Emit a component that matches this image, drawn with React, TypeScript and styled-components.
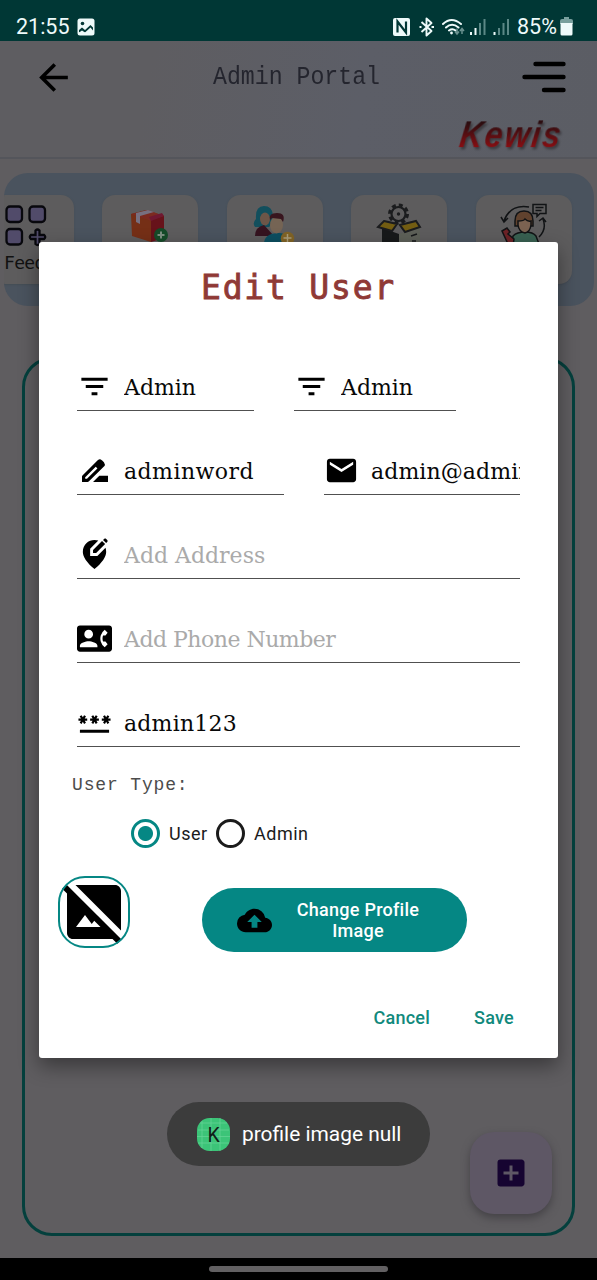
import React from "react";
import styled, { createGlobalStyle } from "styled-components";
import {
  MdAddBox, MdArrowBack, MdCloudUpload, MdContactPhone,
  MdEditLocationAlt, MdEmail, MdFilterList, MdHideImage, MdPassword,
} from "react-icons/md";

const teal = "#058784";

const GlobalStyle = createGlobalStyle`
  * { box-sizing: border-box; }
  body { margin: 0; background: #000; font-family: Roboto, sans-serif; }
  svg { display: block; flex: none; }
`;

const Screen = styled.div`
  position: relative;
  width: 597px;
  height: 1280px;
  overflow: hidden;
  display: flex;
  flex-direction: column;
  background: #5f5d60;
`;
const StatusBar = styled.div`
  height: 41px;
  flex: none;
  padding: 12px 24px 0 16px;
  display: flex;
  align-items: center;
  color: #eefafa;
  background: #003735;
`;
const StatusText = styled.span<{ $width: number }>`
  width: ${(p) => p.$width}px;
  font-size: 21.5px;
  line-height: 29px;
  white-space: nowrap;
`;
const StatusIcons = styled.div`
  margin-left: auto;
  display: flex;
  align-items: center;
`;
const Header = styled.header`
  height: 118px;
  flex: none;
  display: flex;
  flex-direction: column;
  border-bottom: 2px solid #54555b;
  background: linear-gradient(100deg, #5e5d61 25%, #5c5e67 60%, #5b5d64);
`;
const HeaderRow = styled.div`
  height: 72px;
  padding: 0 31px 0 32px;
  display: flex;
  align-items: center;
`;
const PortalTitle = styled.h1`
  flex: 1;
  margin: 0 0 1px 138px;
  font: 400 23.2px/30px "Liberation Mono", monospace;
  color: #24252e;
  transform: scaleY(1.1);
`;
const Logo = styled.div`
  align-self: flex-end;
  margin: 1px 30px 0 0;
  width: 110px;
  padding-left: 3px;
  font: italic 700 32px/42px "Liberation Sans", sans-serif;
  letter-spacing: 2px;
  white-space: nowrap;
  color: transparent;
  background: linear-gradient(#2c0d10 25%, #850e12 75%);
  background-clip: text;
  filter: drop-shadow(2px 2px 1px #3b3b40);
  transform: skewX(-8deg) scaleY(1.12);
`;
const Carousel = styled.div`
  margin: 14px 3px 0 4px;
  height: 133px;
  flex: none;
  padding-top: 22px;
  display: flex;
  gap: 28.4px;
  overflow: hidden;
  border-radius: 24px;
  background: #4a535e;
`;
const Tile = styled.div`
  flex: none;
  width: 96px;
  height: 89px;
  display: flex;
  flex-direction: column;
  border-radius: 13px;
  background: #5d5c5d;
  box-shadow: 0 1px 2px #454c55;
  &:first-child { margin-left: -26px; }
`;
const TileLabel = styled.span`
  padding-left: 26px;
  font: 18px/26px "DejaVu Sans Mono", monospace;
  letter-spacing: -0.7px;
  color: #111;
`;
const Frame = styled.main`
  margin: 51px 22px 22px;
  flex: 1;
  border: 3px solid #04403d;
  border-radius: 30px;
`;
const NavBar = styled.div`
  height: 22px;
  flex: none;
  display: flex;
  justify-content: center;
  padding-top: 8px;
  background: #000;
`;
const NavPill = styled.div`
  width: 179px;
  height: 6px;
  border-radius: 3px;
  background: #626062;
`;
const Fab = styled.button`
  position: absolute;
  left: 470px;
  top: 1132px;
  width: 82px;
  height: 82px;
  padding: 0;
  border: 0;
  border-radius: 24px;
  display: grid;
  place-items: center;
  color: #160431;
  background: #5e5765;
  box-shadow: 0 4px 9px #444246;
`;
const Toast = styled.div`
  position: absolute;
  left: 167px;
  top: 1102px;
  width: 263px;
  height: 64px;
  padding-left: 30px;
  display: flex;
  align-items: center;
  gap: 12px;
  border-radius: 32px;
  font-size: 20.9px;
  white-space: nowrap;
  color: #fff;
  background: #3c3c3c;
`;
const Dialog = styled.section`
  position: absolute;
  left: 39px;
  top: 242px;
  width: 519px;
  height: 816px;
  padding: 25px 38px 0;
  display: flex;
  flex-direction: column;
  border-radius: 3px;
  background: #fff;
  box-shadow: 0 8px 20px rgba(0, 0, 0, 0.4);
`;
const DialogTitle = styled.h2`
  margin: 0 0 18px;
  text-align: center;
  font: 400 33px/42px "DejaVu Sans Mono", monospace;
  letter-spacing: 1.8px;
  color: #8f3936;
  -webkit-text-stroke: 0.9px #8f3936;
`;
const FieldRow = styled.div`
  height: 84px;
  display: flex;
  align-items: flex-end;
  gap: 40px;
`;
const Field = styled.div<{ $width: number; $hint?: boolean; $tracking: number }>`
  width: ${(p) => p.$width}px;
  height: 48px;
  display: flex;
  align-items: center;
  gap: 12px;
  border-bottom: 1.5px solid #505050;
  color: #000;
  span {
    flex: 1;
    min-width: 0;
    padding-top: 2px;
    overflow: hidden;
    white-space: nowrap;
    font: 22px/30px "DejaVu Serif", serif;
    letter-spacing: ${(p) => p.$tracking}px;
    color: ${(p) => (p.$hint ? "#aaa" : "#080808")};
  }
`;
const TypeLabel = styled.div`
  margin: 26px 0 0 -5px;
  font: 18px/24px "Liberation Mono", monospace;
  letter-spacing: 0.85px;
  color: #4c4c4c;
`;
const RadioRow = styled.div`
  margin: 22px 0 0 55px;
  display: flex;
  align-items: center;
`;
const Radio = styled.label<{ $width: number }>`
  width: ${(p) => p.$width}px;
  display: flex;
  align-items: center;
  gap: 9px;
  font-size: 18px;
  line-height: 22px;
  letter-spacing: 0.5px;
  white-space: nowrap;
  color: #1b1b1b;
`;
const RadioDot = styled.span<{ $on?: boolean }>`
  width: 29px;
  height: 29px;
  margin: 0 0 0 -1px;
  flex: none;
  border-radius: 50%;
  border: 3px solid ${(p) => (p.$on ? teal : "#1b1b1b")};
  background: ${(p) => (p.$on ? `radial-gradient(circle, ${teal} 7px, #fff 8px)` : "#fff")};
`;
const ImageRow = styled.div`
  margin: 24px 0 0 -19px;
  display: flex;
  align-items: center;
  gap: 72px;
`;
const Avatar = styled.div`
  position: relative;
  width: 72px;
  height: 72px;
  border-radius: 27px;
  color: #000;
  &::after {
    content: "";
    position: absolute;
    inset: 0;
    border: 2.5px solid ${teal};
    border-radius: 27px;
  }
`;
const UploadButton = styled.button`
  width: 265px;
  height: 64px;
  margin-top: 16px;
  padding: 0 35px;
  border: 0;
  border-radius: 32px;
  display: flex;
  align-items: center;
  color: #000;
  background: ${teal};
  span {
    flex: 1;
    padding-left: 12px;
    white-space: pre-line;
    text-align: center;
    font: 500 18px/21.5px Roboto, sans-serif;
    letter-spacing: 0.25px;
    color: #fff;
  }
`;
const Actions = styled.div`
  margin: 45px 6px 0 0;
  display: flex;
  justify-content: flex-end;
  gap: 44px;
`;
const TextButton = styled.button`
  padding: 0;
  border: 0;
  background: none;
  font: 500 18px/42px Roboto, sans-serif;
  letter-spacing: 0.25px;
  color: #11897c;
`;

const GalleryIcon = () => (
  <svg width="18" height="18" viewBox="0 0 18 18">
    <rect x="0.5" y="0.5" width="17" height="17" rx="2.5" fill="#eefafa" />
    <circle cx="5.5" cy="5.5" r="1.8" fill="#003735" />
    <path d="M2 14.500v-2.500l3-2.500 3 2.500 5.500-5 2.500 2.500v5z" fill="#003735" />
    <path d="M2 15.500v-1l3-2 3 2 5.500-5 2.500 3v3z" fill="#eefafa" />
  </svg>
);

const StatusGlyphs = () => (
  <svg width="120" height="22" viewBox="390 16 120 22" fill="none" stroke="#eefafa">
    <rect x="393" y="18" width="17" height="18" rx="2" fill="#eefafa" stroke="none" />
    <path d="M397.500 32.500v-11l8.500 11v-11" stroke="#003735" strokeWidth="2.200" />
    <path d="M421.500 22l10 9-5 4.500v-17l5 4.500-10 9" strokeWidth="1.900" strokeLinejoin="round" />
    <path d="M419.500 27h2M431.500 27h2.500" strokeWidth="2" />
    <path d="M443 24q8.500-8 18 0M446 27.500q6-5.500 12.500 0M449 30.500q3.500-2.500 6.500 0" strokeWidth="2" strokeLinecap="round" />
    <circle cx="451.500" cy="33" r="1.400" fill="#eefafa" stroke="none" />
    <path d="M457 28.500v5.500M455 31.500l2 2.500 2-2.500M462 34v-5.500M460 31l2-2.500 2 2.500" stroke="#6b9290" strokeWidth="1.500" />
    <path d="M471 35v-3M475.500 35v-7" strokeWidth="2" />
    <path d="M480 35V23M484.500 35V19" stroke="#5b8886" strokeWidth="2" />
    <path d="M494.500 35v-3" strokeWidth="2" />
    <path d="M499 35v-7M503.500 35V23M508 35V19" stroke="#5b8886" strokeWidth="2" />
  </svg>
);

const BatteryIcon = () => (
  <svg width="13" height="19" viewBox="0 0 13 19">
    <path d="M4 0h5v2h2q2 0 2 2v3H0V4q0-2 2-2h2z" fill="#789f9d" />
    <path d="M0.500 6h12v11q0 1.500-1.500 1.500H2Q0.500 18.500 0.500 17z" fill="#eefafa" />
  </svg>
);

const MenuIcon = () => (
  <svg width="44" height="32" viewBox="0 0 44 32" stroke="#000" strokeWidth="4.400" strokeLinecap="round">
    <path d="M13.500 3H41.500M2.500 16H41.500M22 29H41.500" />
  </svg>
);

const PenIcon = () => (
  <svg width="35" height="35" viewBox="0 0 35 35">
    <path d="M6.600 27.400V23.600L21.800 8.400q1-.8 2 0l2 2q.8 1 0 2L10.600 27.400z" fill="none" stroke="#000" strokeWidth="3.200" strokeLinejoin="round" />
    <path d="M17.500 12.500l4.500-4.500 4.500 4.500-4.500 4.500z" />
    <path d="M5 24h3v5H5zM16 29l6.300-6.300H31V29z" />
  </svg>
);

const FeedIcon = () => (
  <svg width="96" height="55" viewBox="-22 195 96 55" fill="#514b6a" stroke="#08080d" strokeWidth="2.300">
    <rect x="6.500" y="206.500" width="15.500" height="15.500" rx="3.500" />
    <rect x="29.500" y="206.500" width="15.500" height="15.500" rx="3.500" />
    <rect x="6.500" y="229" width="15.500" height="15.500" rx="3.500" />
    <path d="M35.500 230.500q2-2 4 0v4.500h4.500q2.500 2 0 4H39.500v5q-2 2-4 0V239H31q-2.500-2 0-4h4.500z" />
  </svg>
);

const ParcelIcon = () => (
  <svg width="96" height="56" viewBox="102 195 96 56">
    <path d="M131 214l15-4 18 6-13 26-19-6z" fill="#752f16" />
    <path d="M131 214l17-4 16 6-13 5z" fill="#7c2a20" />
    <path d="M151 220l13-4v22l-13 4z" fill="#67121a" />
    <path d="M149 217l13-4 2 3-13 5z" fill="#701831" />
    <path d="M136 213l12-3 6 2-14 4v8l-4-2z" fill="#777080" />
    <circle cx="161" cy="235" r="7" fill="#154b28" />
    <path d="M157.500 235h7M161 231.500v7" stroke="#7b8e7f" strokeWidth="2" />
  </svg>
);

const UsersIcon = () => (
  <svg width="96" height="56" viewBox="227 195 96 56">
    <path d="M255 227q-3-4 1-8-1-13 8-13 8 0 9 9 1 9-4 12z" fill="#124f5d" />
    <ellipse cx="265" cy="219" rx="5" ry="6.500" fill="#6c5648" />
    <path d="M255 236q0-9 9-11l10 11z" fill="#351420" />
    <path d="M264 244q0-10 13-11t13 11z" fill="#0c4e60" />
    <ellipse cx="276.500" cy="225" rx="6.500" ry="8.500" fill="#756454" />
    <path d="M270 220q-2-7 7-7 9 0 6 9l-2-3-9-1z" fill="#38151e" />
    <circle cx="287.500" cy="238.500" r="6.800" fill="#806326" />
    <path d="M283.500 238h8M287.500 234v8" stroke="#aa9d79" strokeWidth="1.500" />
  </svg>
);

const ProductIcon = () => (
  <svg width="96" height="56" viewBox="351 195 96 56">
    <circle cx="398.500" cy="214" r="9" fill="none" stroke="#1b1c1e" strokeWidth="3" strokeDasharray="4 3.070" />
    <circle cx="398.500" cy="214" r="7" fill="#5d5c5d" stroke="#1b1c1e" strokeWidth="2.200" />
    <circle cx="398.500" cy="214" r="1.700" fill="#1b1c1e" />
    <path d="M382 228l17 6v12h-17z" fill="#17191a" />
    <path d="M399 234l21-7v19h-21z" fill="#5d6058" />
    <path d="M384 221l13 3-5 7-14-4zM400 225l16-4 4 6-15 5z" fill="#735d12" stroke="#1b1c1e" strokeWidth="2" />
    <path d="M411 236l6-2M412 241h4" stroke="#17191a" strokeWidth="1.500" />
  </svg>
);

const SupportIcon = () => (
  <svg width="96" height="56" viewBox="475 195 96 56" fill="none" stroke="#111315" strokeWidth="1.500">
    <path d="M528 207q-19-3-25 14M500 217l3 5 4-4M542 219q4 10-4 18M538 221l4-3 3 4" />
    <path d="M532 204.500h13v9h-6l-3 3v-3h-4zM534.500 207.500h8M534.500 210.500h6" />
    <path d="M510 246l2-10q4-4 12-4t11 4l3 8z" fill="#386051" />
    <path d="M514 226v-5q0-10 9-10t9 10v5z" fill="#60422e" />
    <path d="M517 221q6 0 7-2 3 3 6 2v4q-1 7-6 8-6-1-7-8z" fill="#7b6251" />
    <path d="M501 231l5-3 3 4-2 2 6 5-1 7-5-2z" fill="#6c2226" />
  </svg>
);

const AppIcon = () => (
  <svg width="33" height="33" viewBox="0 0 33 33">
    <rect width="33" height="33" rx="12.500" fill="#3cc478" />
    <path d="M0 18.500h33M5 3v27M14 0v33M23 0v33M3 5h27M1 12h31M1 25h31" stroke="#67d698" strokeWidth="0.700" />
    <text x="16.500" y="23.500" textAnchor="middle" fontFamily="Roboto, sans-serif" fontSize="19.500" fill="#102019">K</text>
  </svg>
);

interface EntryProps {
  icon: React.ReactNode;
  text: string;
  width?: number;
  hint?: boolean;
  tracking?: number;
}
const Entry = ({ icon, text, width = 443, hint, tracking = 0 }: EntryProps) => (
  <Field $width={width} $hint={hint} $tracking={tracking}>
    {icon}
    <span>{text}</span>
  </Field>
);

export default function App() {
  return (
    <Screen>
      <GlobalStyle />
      <StatusBar>
        <StatusText $width={61}>21:55</StatusText>
        <GalleryIcon />
        <StatusIcons>
          <StatusGlyphs />
          <StatusText $width={7} />
          <StatusText $width={43}>85%</StatusText>
          <BatteryIcon />
        </StatusIcons>
      </StatusBar>
      <Header>
        <HeaderRow>
          <MdArrowBack size={43} color="#000" />
          <PortalTitle>Admin Portal</PortalTitle>
          <MenuIcon />
        </HeaderRow>
        <Logo>Kewis</Logo>
      </Header>
      <Carousel>
        <Tile>
          <FeedIcon />
          <TileLabel>Feed</TileLabel>
        </Tile>
        <Tile><ParcelIcon /></Tile>
        <Tile><UsersIcon /></Tile>
        <Tile><ProductIcon /></Tile>
        <Tile><SupportIcon /></Tile>
      </Carousel>
      <Frame />
      <NavBar><NavPill /></NavBar>
      <Fab><MdAddBox size={36} /></Fab>
      <Dialog>
        <DialogTitle>Edit User</DialogTitle>
        <FieldRow>
          <Entry width={177} icon={<MdFilterList size={35} />} text="Admin" />
          <Entry width={162} icon={<MdFilterList size={35} />} text="Admin" />
        </FieldRow>
        <FieldRow>
          <Entry width={207} icon={<PenIcon />} text="adminword" tracking={0.45} />
          <Entry width={196} icon={<MdEmail size={35} />} text="admin@admin" tracking={0.1} />
        </FieldRow>
        <FieldRow>
          <Entry hint icon={<MdEditLocationAlt size={35} />} text="Add Address" />
        </FieldRow>
        <FieldRow>
          <Entry hint icon={<MdContactPhone size={35} />} text="Add Phone Number" tracking={-0.5} />
        </FieldRow>
        <FieldRow>
          <Entry icon={<MdPassword size={35} />} text="admin123" tracking={0.2} />
        </FieldRow>
        <TypeLabel>User Type:</TypeLabel>
        <RadioRow>
          <Radio $width={85}><RadioDot $on />User</Radio>
          <Radio $width={95}><RadioDot />Admin</Radio>
        </RadioRow>
        <ImageRow>
          <Avatar><MdHideImage size={72} /></Avatar>
          <UploadButton>
            <MdCloudUpload size={35} />
            <span>{"Change Profile\nImage"}</span>
          </UploadButton>
        </ImageRow>
        <Actions>
          <TextButton>Cancel</TextButton>
          <TextButton>Save</TextButton>
        </Actions>
      </Dialog>
      <Toast>
        <AppIcon />
        profile image null
      </Toast>
    </Screen>
  );
}
